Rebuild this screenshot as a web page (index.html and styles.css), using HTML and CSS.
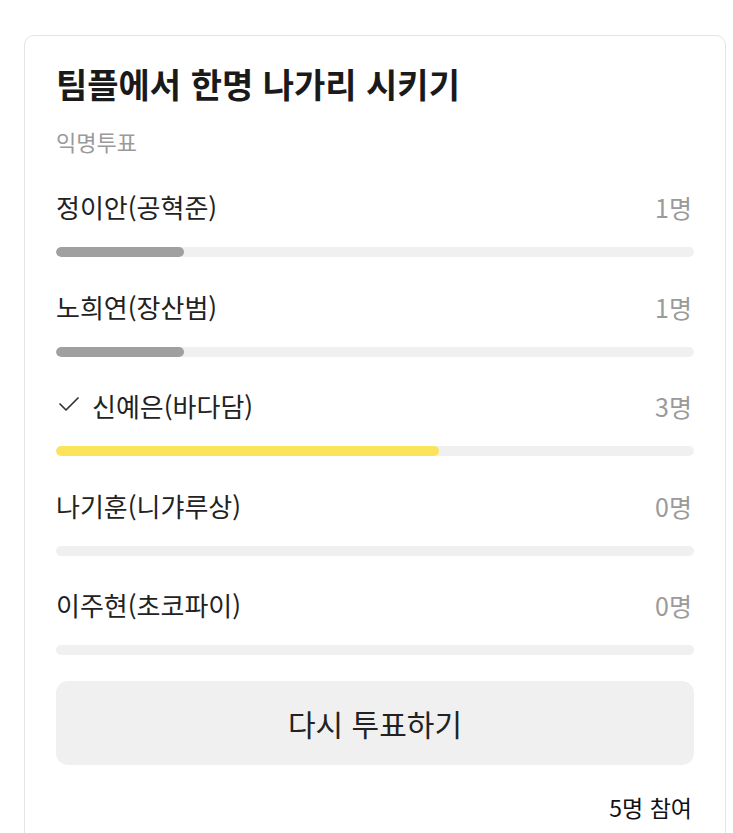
FILE: index.html
```html
<!DOCTYPE html>
<html lang="ko">
<head>
<meta charset="utf-8">
<link rel="stylesheet" href="styles.css">
</head>
<body>
<div class="card">
  <h1 class="title">팀플에서 한명 나가리 시키기</h1>
  <div class="subtitle">익명투표</div>
  <ul class="options">
    <li class="option">
      <div class="row"><span class="name">정이안(공혁준)</span><span class="count">1명</span></div>
      <div class="track"><div class="fill" style="width:20%"></div></div>
    </li>
    <li class="option">
      <div class="row"><span class="name">노희연(장산범)</span><span class="count">1명</span></div>
      <div class="track"><div class="fill" style="width:20%"></div></div>
    </li>
    <li class="option selected">
      <div class="row"><span class="name"><svg class="check" width="22" height="16" viewBox="0 0 22 16"><path d="M2 8 L8 14 L20 2" fill="none" stroke="#333" stroke-width="1.7" stroke-linecap="round" stroke-linejoin="round"/></svg>신예은(바다담)</span><span class="count">3명</span></div>
      <div class="track"><div class="fill" style="width:60%"></div></div>
    </li>
    <li class="option">
      <div class="row"><span class="name">나기훈(니갸루상)</span><span class="count">0명</span></div>
      <div class="track"><div class="fill" style="width:0%"></div></div>
    </li>
    <li class="option">
      <div class="row"><span class="name">이주현(초코파이)</span><span class="count">0명</span></div>
      <div class="track"><div class="fill" style="width:0%"></div></div>
    </li>
  </ul>
  <button class="revote">다시 투표하기</button>
  <div class="participants">5명 참여</div>
</div>
</body>
</html>
```
FILE: styles.css
```css
* { box-sizing: border-box; }
html, body { margin: 0; padding: 0; background: #fff; }
body {
  font-family: "Noto Sans CJK KR", "Noto Sans", sans-serif;
  color: #222;
  overflow: hidden;
  height: 833px;
}
.card {
  margin: 35px 0 0 24px;
  width: 702px;
  height: 900px;
  border: 1px solid #e4e4e4;
  border-radius: 10px;
  padding: 24px 31px 0 31px;
}
.title {
  margin: 0;
  font-size: 34px;
  font-weight: 700;
  line-height: 48px;
  color: #1a1a1a;
}
.subtitle {
  margin-top: 18px;
  font-size: 22px;
  line-height: 30px;
  color: #9a9a9a;
}
.options {
  list-style: none;
  margin: 31px 0 0 0;
  padding: 0;
  display: flex;
  flex-direction: column;
  gap: 29.5px;
}
.row {
  display: flex;
  justify-content: space-between;
  align-items: center;
  height: 40px;
}
.name {
  font-size: 26px;
  line-height: 40px;
  color: #222;
  display: flex;
  align-items: center;
}
.check { margin: 0 12px 4px 2px; }
.count {
  font-size: 25px;
  line-height: 40px;
  color: #9a9a9a;
  padding-right: 2px;
}
.track {
  margin-top: 20px;
  height: 10px;
  border-radius: 5px;
  background: #f0f0f0;
  overflow: hidden;
}
.fill {
  height: 100%;
  background: #a0a0a0;
  border-radius: 5px;
}
.selected .fill { background: #fce45a; }
.revote {
  display: block;
  width: 100%;
  margin-top: 26px;
  height: 84px;
  border: none;
  border-radius: 12px;
  background: #f0f0f0;
  font-family: inherit;
  font-size: 30px;
  color: #222;
}
.participants {
  margin-top: 26px;
  text-align: right;
  font-size: 23px;
  line-height: 32px;
  color: #111;
  padding-right: 2px;
}
```
